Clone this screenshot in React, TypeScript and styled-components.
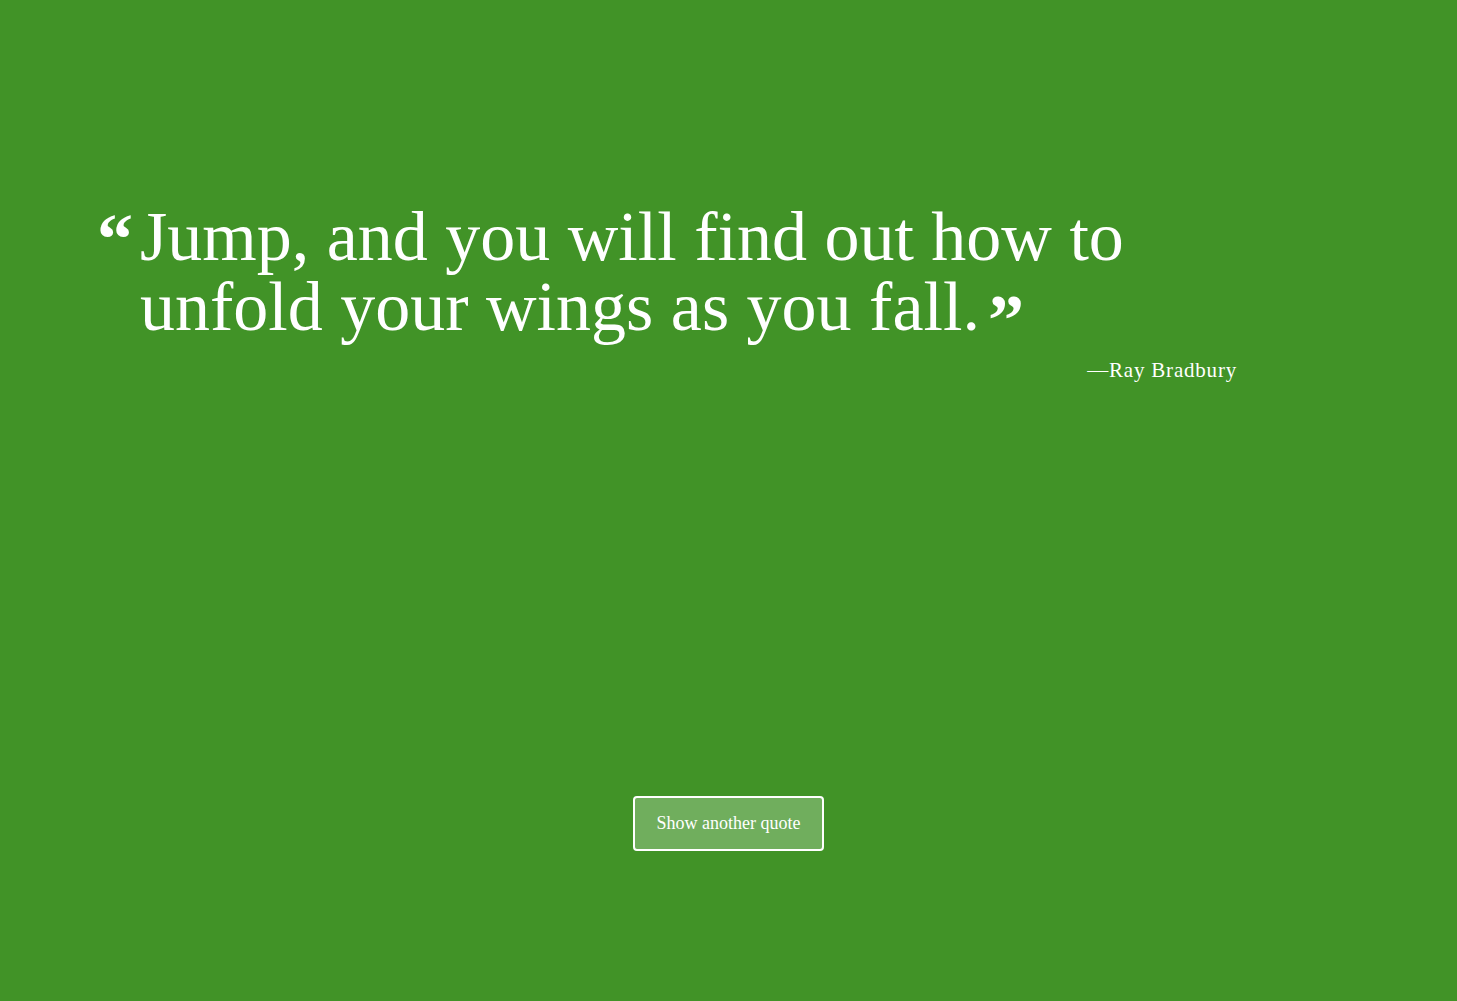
import React from "react";
import styled, { createGlobalStyle } from "styled-components";

const Global = createGlobalStyle`
  html, body { margin: 0; padding: 0; }
  body {
    background: #419327;
    color: #ffffff;
    font-family: "Liberation Serif", "Times New Roman", serif;
  }
`;

const Page = styled.main`
  min-height: 100vh;
  box-sizing: border-box;
  padding-top: 202px;
  display: flex;
  flex-direction: column;
`;

const QuoteBox = styled.figure`
  margin: 0 0 0 97px;
  width: 1140px;
  display: flex;
  flex-direction: column;
`;

const QuoteRow = styled.blockquote`
  margin: 0;
  display: flex;
  align-items: flex-start;
`;

const OpenMark = styled.span`
  flex: 0 0 43px;
  font-weight: 700;
  font-size: 72px;
  line-height: 1;
  margin-top: 1px;
`;

const QuoteText = styled.p`
  margin: 0;
  flex: 1;
  font-size: 70px;
  line-height: 70px;
`;

const CloseMark = styled.span`
  display: inline-block;
  vertical-align: top;
  height: 40px;
  margin-top: 28px;
  margin-left: 8px;
  font-weight: 700;
  font-size: 72px;
  line-height: 40px;
`;

const Author = styled.figcaption`
  margin-top: 15px;
  text-align: right;
  font-size: 21px;
  line-height: 26px;
  letter-spacing: 0.8px;
`;

const ButtonRow = styled.div`
  margin-top: 413px;
  display: flex;
  justify-content: center;
`;

const Button = styled.button`
  font-family: "Liberation Serif", "Times New Roman", serif;
  font-size: 18px;
  color: #ffffff;
  background: rgba(255, 255, 255, 0.25);
  border: 2px solid #ffffff;
  border-radius: 4px;
  padding: 0 22px;
  height: 55px;
  cursor: pointer;
`;

export default function App() {
  return (
    <>
      <Global />
      <Page>
        <QuoteBox>
          <QuoteRow>
            <OpenMark>“</OpenMark>
            <QuoteText>
              Jump, and you will find out how to unfold your wings as you fall.
              <CloseMark>”</CloseMark>
            </QuoteText>
          </QuoteRow>
          <Author>—Ray Bradbury</Author>
        </QuoteBox>
        <ButtonRow>
          <Button type="button">Show another quote</Button>
        </ButtonRow>
      </Page>
    </>
  );
}
